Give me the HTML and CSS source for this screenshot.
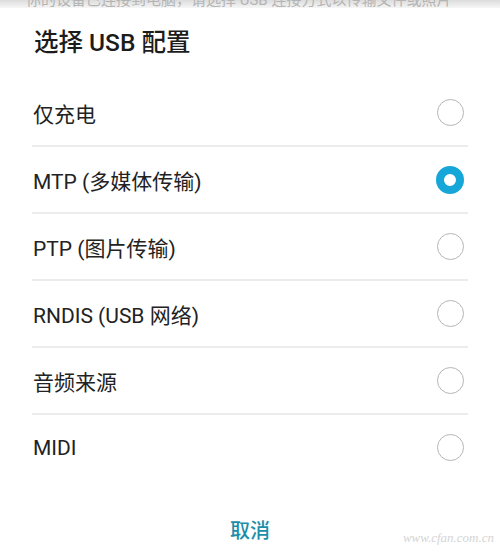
FILE: index.html
```html
<!DOCTYPE html>
<html lang="zh-CN">
<head>
    <meta charset="UTF-8">
    <meta name="viewport" content="width=device-width, initial-scale=1.0">
    <title>选择 USB 配置</title>
    <link rel="stylesheet" href="styles.css">
</head>
<body>
    <div class="peek">
        <p>你的设备已连接到电脑，请选择 USB 连接方式以传输文件或照片</p>
    </div>
    <div class="dialog">
        <h1 class="title">选择 USB 配置</h1>
        <ul class="options">
            <li class="option">
                <span class="label">仅充电</span>
                <span class="radio"></span>
            </li>
            <li class="option">
                <span class="label">MTP (多媒体传输)</span>
                <span class="radio checked"></span>
            </li>
            <li class="option">
                <span class="label">PTP (图片传输)</span>
                <span class="radio"></span>
            </li>
            <li class="option">
                <span class="label">RNDIS (USB 网络)</span>
                <span class="radio"></span>
            </li>
            <li class="option">
                <span class="label">音频来源</span>
                <span class="radio"></span>
            </li>
            <li class="option">
                <span class="label">MIDI</span>
                <span class="radio"></span>
            </li>
        </ul>
        <div class="actions">
            <button class="cancel">取消</button>
        </div>
    </div>
    <span class="watermark">www.cfan.com.cn</span>
</body>
</html>
```

FILE: styles.css
```css
body {
    font-family: Roboto, "Noto Sans CJK SC", sans-serif;
    background-color: #fff;
    color: #222;
    margin: 0;
    padding: 0;
    width: 500px;
    height: 555px;
    overflow: hidden;
    position: relative;
}
.peek {
    height: 8px;
    overflow: hidden;
    background: linear-gradient(#dcdcdc, #f6f6f6);
}
.peek p {
    margin: -9px 0 0 26px;
    font-size: 15px;
    line-height: 18px;
    color: #b4b4b4;
    white-space: nowrap;
}
.title {
    margin: 19px 0 0 34px;
    font-size: 24.5px;
    font-weight: 500;
    line-height: 32px;
    color: #1c1c1c;
}
.options {
    list-style: none;
    margin: 21px 32px 0 32px;
    padding: 0;
}
.option {
    display: flex;
    align-items: center;
    justify-content: space-between;
    height: 65px;
    padding: 0 4px 0 1px;
    border-bottom: 2px solid #ececec;
}
.option:last-child {
    border-bottom: none;
}
.label {
    font-size: 21px;
    color: #222;
}
.radio {
    width: 27px;
    height: 27px;
    box-sizing: border-box;
    border: 1.5px solid #b5b5b5;
    border-radius: 50%;
}
.radio.checked {
    width: 28px;
    height: 28px;
    border: 8px solid #16a7d8;
}
.actions {
    display: flex;
    justify-content: center;
    margin-top: 28px;
}
.cancel {
    background: none;
    border: none;
    font-family: inherit;
    font-size: 20px;
    font-weight: 500;
    line-height: 46px;
    color: #1d8ea9;
    padding: 0 10px;
}
.watermark {
    position: absolute;
    right: 6px;
    bottom: 9px;
    font-family: "Liberation Serif", serif;
    font-style: italic;
    font-size: 13px;
    color: #d4d4d4;
}
```
